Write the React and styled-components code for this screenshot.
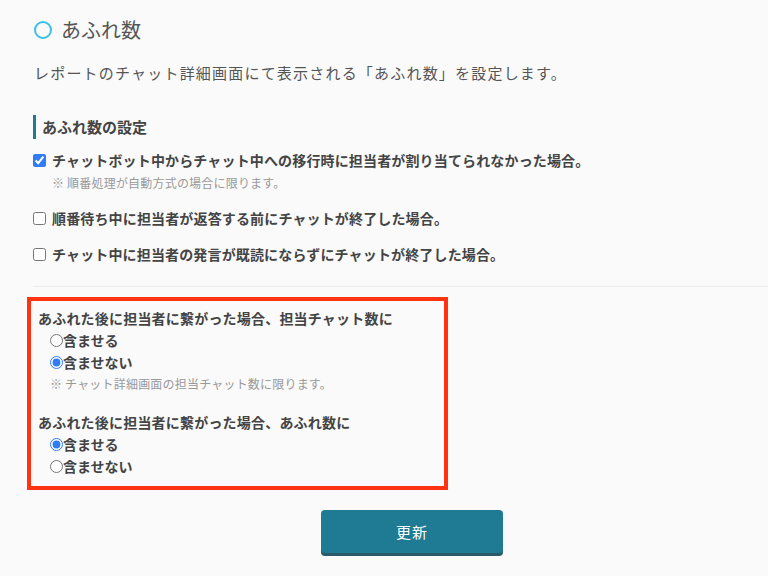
import styled, { createGlobalStyle } from "styled-components";

const GlobalStyle = createGlobalStyle`
  body {
    margin: 0;
    background: #fafafa;
    font-family: "Noto Sans CJK JP", "Noto Sans", sans-serif;
    color: #444;
  }
`;

const Page = styled.div`
  padding: 16px 0 20px 33px;
`;

const TitleRow = styled.h1`
  display: flex;
  align-items: center;
  gap: 9px;
  margin: 0;
  font-size: 20px;
  font-weight: 400;
  line-height: 28px;
  color: #555;
`;

const Ring = styled.span`
  width: 14px;
  height: 14px;
  border: 2.5px solid #3dc0e8;
  border-radius: 50%;
  margin-left: 1px;
`;

const Description = styled.p`
  margin: 18px 0 0 1px;
  font-size: 15px;
  line-height: 22px;
  color: #555;
  letter-spacing: 1.2px;
`;

const SectionHeading = styled.h2`
  margin: 31px 0 0;
  padding-left: 6px;
  border-left: 3px solid #1f7a93;
  font-size: 15px;
  font-weight: 700;
  line-height: 24px;
  color: #444;
`;

const CheckList = styled.div`
  margin-top: 11px;
  display: flex;
  flex-direction: column;
  gap: 16px;
`;

const CheckItem = styled.div``;

const CheckLabel = styled.label`
  display: flex;
  align-items: center;
  gap: 6px;
  font-size: 14px;
  font-weight: 700;
  line-height: 20px;
  letter-spacing: 0.15px;
  color: #444;
`;

const Checkbox = styled.input.attrs({ type: "checkbox" })`
  width: 13px;
  height: 13px;
  margin: 0;
  accent-color: #2f7cf6;
`;

const Note = styled.div`
  margin: ${({ $top }) => $top || 4}px 0 0 ${({ $indent }) => $indent || 19}px;
  font-size: 12px;
  line-height: 18px;
  letter-spacing: 0.2px;
  color: #999;
`;

const Divider = styled.hr`
  margin: 22px 0 0;
  border: 0;
  border-top: 1px solid #ececec;
`;

const Highlight = styled.div`
  box-sizing: border-box;
  width: 421px;
  margin: 10px 0 0 -6px;
  border: 4px solid #ff3311;
  padding: 6px 7px 9px;
`;

const Question = styled.div`
  margin-top: ${({ $top }) => $top || 0}px;
  font-size: 14px;
  font-weight: 700;
  line-height: 22px;
  letter-spacing: 0.2px;
  color: #444;
`;

const RadioLabel = styled.label`
  display: flex;
  align-items: center;
  margin-left: 12px;
  font-size: 14px;
  font-weight: 700;
  line-height: 22px;
  color: #444;
`;

const Radio = styled.input.attrs({ type: "radio" })`
  width: 13px;
  height: 13px;
  margin: 0;
  accent-color: #2f7cf6;
`;

const ButtonRow = styled.div`
  margin-top: 20px;
  padding-left: 288px;
`;

const SubmitButton = styled.button`
  width: 182px;
  height: 43px;
  border: 0;
  border-radius: 4px;
  background: #1f7a93;
  box-shadow: 0 3px 0 #2a5a67;
  color: #fff;
  font-family: inherit;
  font-size: 15px;
  letter-spacing: 1px;
`;

const checks = [
  {
    text: "チャットボット中からチャット中への移行時に担当者が割り当てられなかった場合。",
    checked: true,
    note: "※ 順番処理が自動方式の場合に限ります。",
  },
  { text: "順番待ち中に担当者が返答する前にチャットが終了した場合。" },
  { text: "チャット中に担当者の発言が既読にならずにチャットが終了した場合。" },
];

const RadioGroup = ({ name, value }) => (
  <>
    <RadioLabel>
      <Radio name={name} defaultChecked={value === "in"} />
      含ませる
    </RadioLabel>
    <RadioLabel>
      <Radio name={name} defaultChecked={value === "out"} />
      含ませない
    </RadioLabel>
  </>
);

const App = () => (
  <Page>
    <GlobalStyle />
    <TitleRow>
      <Ring />
      あふれ数
    </TitleRow>
    <Description>
      レポートのチャット詳細画面にて表示される「あふれ数」を設定します。
    </Description>

    <SectionHeading>あふれ数の設定</SectionHeading>
    <CheckList>
      {checks.map((c) => (
        <CheckItem key={c.text}>
          <CheckLabel>
            <Checkbox defaultChecked={c.checked} />
            {c.text}
          </CheckLabel>
          {c.note && <Note>{c.note}</Note>}
        </CheckItem>
      ))}
    </CheckList>
    <Divider />

    <Highlight>
      <Question>あふれた後に担当者に繋がった場合、担当チャット数に</Question>
      <RadioGroup name="chatCount" value="out" />
      <Note $top={2} $indent={12}>
        ※ チャット詳細画面の担当チャット数に限ります。
      </Note>
      <Question $top={18}>あふれた後に担当者に繋がった場合、あふれ数に</Question>
      <RadioGroup name="overflowCount" value="in" />
    </Highlight>

    <ButtonRow>
      <SubmitButton>更新</SubmitButton>
    </ButtonRow>
  </Page>
);

export default App;
